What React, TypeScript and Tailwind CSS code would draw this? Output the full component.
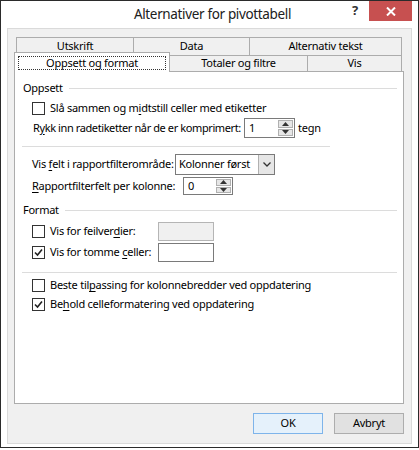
import React from "react";

const F = { fontFamily: '"Noto Sans", "Open Sans", sans-serif' };

function Check({ checked }: { checked?: boolean }) {
  return (
    <div className="w-[13px] h-[13px] border border-[#333333] bg-white flex items-center justify-center shrink-0">
      {checked && (
        <svg width="9" height="9" viewBox="0 0 9 9">
          <path d="M1 4.5 L3.5 7 L8 1.5" stroke="#222" strokeWidth="1.6" fill="none" />
        </svg>
      )}
    </div>
  );
}

function U({ children }: { children: React.ReactNode }) {
  return <span className="underline underline-offset-2">{children}</span>;
}

function Spin({ value, w, h }: { value: string; w: string; h: string }) {
  return (
    <div className={`${w} ${h} border border-[#7a7a7a] bg-white flex items-stretch shrink-0`}>
      <div className="flex-1 pl-[4px] flex items-center">{value}</div>
      <div className="w-[15px] flex flex-col my-[1px] mr-[1px] gap-[1px]">
        <div className="flex-1 bg-[#e6e6e6] border border-[#b0b0b0] flex items-center justify-center">
          <svg width="7" height="4" viewBox="0 0 7 4"><path d="M0 4 L3.5 0 L7 4 Z" fill="#333" /></svg>
        </div>
        <div className="flex-1 bg-[#e6e6e6] border border-[#b0b0b0] flex items-center justify-center">
          <svg width="7" height="4" viewBox="0 0 7 4"><path d="M0 0 L3.5 4 L7 0 Z" fill="#333" /></svg>
        </div>
      </div>
    </div>
  );
}

function Heading({ text }: { text: string }) {
  return (
    <div className="h-[16px] flex items-center pl-[8px] pr-[6px]">
      <span>{text}</span>
      <div className="flex-1 h-px bg-[#dcdcdc] ml-[6px]" />
    </div>
  );
}

export default function App() {
  return (
    <div className="w-[419px] h-[450px] bg-white text-black" style={F}>
      <div className="w-[419px] h-[448px] border border-[#2b2b2b] bg-white flex flex-col">
        {/* title bar */}
        <div className="h-[27px] flex items-start">
          <div className="flex-1 h-[27px] flex items-center justify-center pl-[76px]">
            <span className="text-[13.5px] tracking-[-0.35px] text-[#202020]">Alternativer for pivottabell</span>
          </div>
          <div className="w-[14px] h-[20px] flex items-center justify-center text-[13px] font-bold text-[#333] mr-[7px]">?</div>
          <div className="w-[43px] h-[20px] bg-[#c75050] flex items-center justify-center mr-[6px]">
            <svg width="10" height="9" viewBox="0 0 10 9">
              <path d="M1 0.5 L9 8.5 M9 0.5 L1 8.5" stroke="white" strokeWidth="2" />
            </svg>
          </div>
        </div>
        {/* body */}
        <div className="ml-[6px] w-[405px] h-[416px] border border-[#dadada] bg-[#f0f0f0] flex flex-col pl-[6px] pr-[7px] pt-[8px] text-[11px] tracking-[-0.25px]">
          {/* tabs row 1 */}
          <div className="h-[18px] ml-[2px] w-[386px] flex">
            <div className="w-[117px] border-t border-l border-[#acacac] bg-[#f0f0f0] flex items-center justify-center pb-[1px]">Utskrift</div>
            <div className="w-[116px] border-t border-l border-[#acacac] bg-[#f0f0f0] flex items-center justify-center pb-[1px]">Data</div>
            <div className="flex-1 border-t border-l border-r border-[#acacac] bg-[#f0f0f0] flex items-center justify-center pb-[1px]">Alternativ tekst</div>
          </div>
          {/* tabs row 2 */}
          <div className="h-[16px] flex relative z-10">
            <div className="w-[156px] h-[20px] -mt-[3px] border-t border-l border-r border-[#acacac] bg-white flex items-start justify-center pt-[3px] px-[3px]">
              <div className="w-full h-[14px] border border-dotted border-[#333] flex items-center justify-center">Oppsett og format</div>
            </div>
            <div className="w-[137px] border-t border-[#acacac] bg-[#f0f0f0] flex items-center justify-center">Totaler og filtre</div>
            <div className="w-[95px] border-t border-l border-r border-[#acacac] bg-[#f0f0f0] flex items-center justify-center">Vis</div>
          </div>
          {/* panel */}
          <div className="w-[390px] h-[333px] border border-[#acacac] bg-white flex flex-col">
            <div className="h-[8px]" />
            <Heading text="Oppsett" />
            <div className="h-[20px] mt-[2px] flex items-center pl-[17px] gap-[5px]">
              <Check />
              <span>Slå sammen og m<U>i</U>dtstill celler med etiketter</span>
            </div>
            <div className="h-[20px] flex items-center pl-[18px]">
              <span className="w-[211px] shrink-0 whitespace-nowrap tracking-[-0.4px]">R<U>y</U>kk inn radetiketter når de er komprimert:</span>
              <Spin value="1" w="w-[51px]" h="h-[20px]" />
              <span className="ml-[3px]">tegn</span>
            </div>
            <div className="h-px bg-[#dcdcdc] ml-[7px] w-[308px] mt-[8px]" />
            <div className="h-[21px] mt-[7px] flex items-center pl-[17px]">
              <span className="w-[143px] shrink-0 whitespace-nowrap">Vis <U>f</U>elt i rapportfilterområde:</span>
              <div className="w-[100px] h-[21px] border border-[#7a7a7a] bg-white flex items-stretch">
                <div className="flex-1 flex items-center pl-[3px]">Kolonner først</div>
                <div className="w-[16px] bg-[#e6e6e6] border-l border-[#b0b0b0] flex items-center justify-center">
                  <svg width="8" height="5" viewBox="0 0 8 5"><path d="M0.5 0.5 L4 4 L7.5 0.5" stroke="#333" strokeWidth="1.3" fill="none" /></svg>
                </div>
              </div>
            </div>
            <div className="h-[20px] mt-[1px] flex items-center pl-[17px]">
              <span className="w-[151px] shrink-0 whitespace-nowrap"><U>R</U>apportfilterfelt per kolonne:</span>
              <Spin value="0" w="w-[50px]" h="h-[18px]" />
            </div>
            <div className="mt-[6px]"><Heading text="Format" /></div>
            <div className="h-[20px] mt-[3px] flex items-center pl-[17px]">
              <Check />
              <span className="ml-[5px] w-[108px] shrink-0 whitespace-nowrap">Vis for feilver<U>d</U>ier:</span>
              <div className="w-[56px] h-[19px] border border-[#b5b5b5] bg-[#f0f0f0]" />
            </div>
            <div className="h-[20px] mt-[1px] flex items-center pl-[17px]">
              <Check checked />
              <span className="ml-[5px] w-[108px] shrink-0 whitespace-nowrap">Vis for tomme <U>c</U>eller:</span>
              <div className="w-[56px] h-[19px] border border-[#7a7a7a] bg-white" />
            </div>
            <div className="h-px bg-[#dcdcdc] ml-[7px] mr-[6px] mt-[10px]" />
            <div className="h-[19px] mt-[3px] flex items-center pl-[17px] gap-[5px]">
              <Check />
              <span>Beste til<U>p</U>assing for kolonnebredder ved oppdatering</span>
            </div>
            <div className="h-[19px] flex items-center pl-[17px] gap-[5px]">
              <Check checked />
              <span>Be<U>h</U>old celleformatering ved oppdatering</span>
            </div>
          </div>
          {/* buttons */}
          <div className="flex justify-end gap-[11px] mt-[9px]">
            <div className="w-[70px] h-[21px] border border-[#7eb4ea] bg-[#e5f1fb] flex items-center justify-center">OK</div>
            <div className="w-[70px] h-[21px] border border-[#adadad] bg-[#e1e1e1] flex items-center justify-center">Avbryt</div>
          </div>
        </div>
      </div>
    </div>
  );
}
